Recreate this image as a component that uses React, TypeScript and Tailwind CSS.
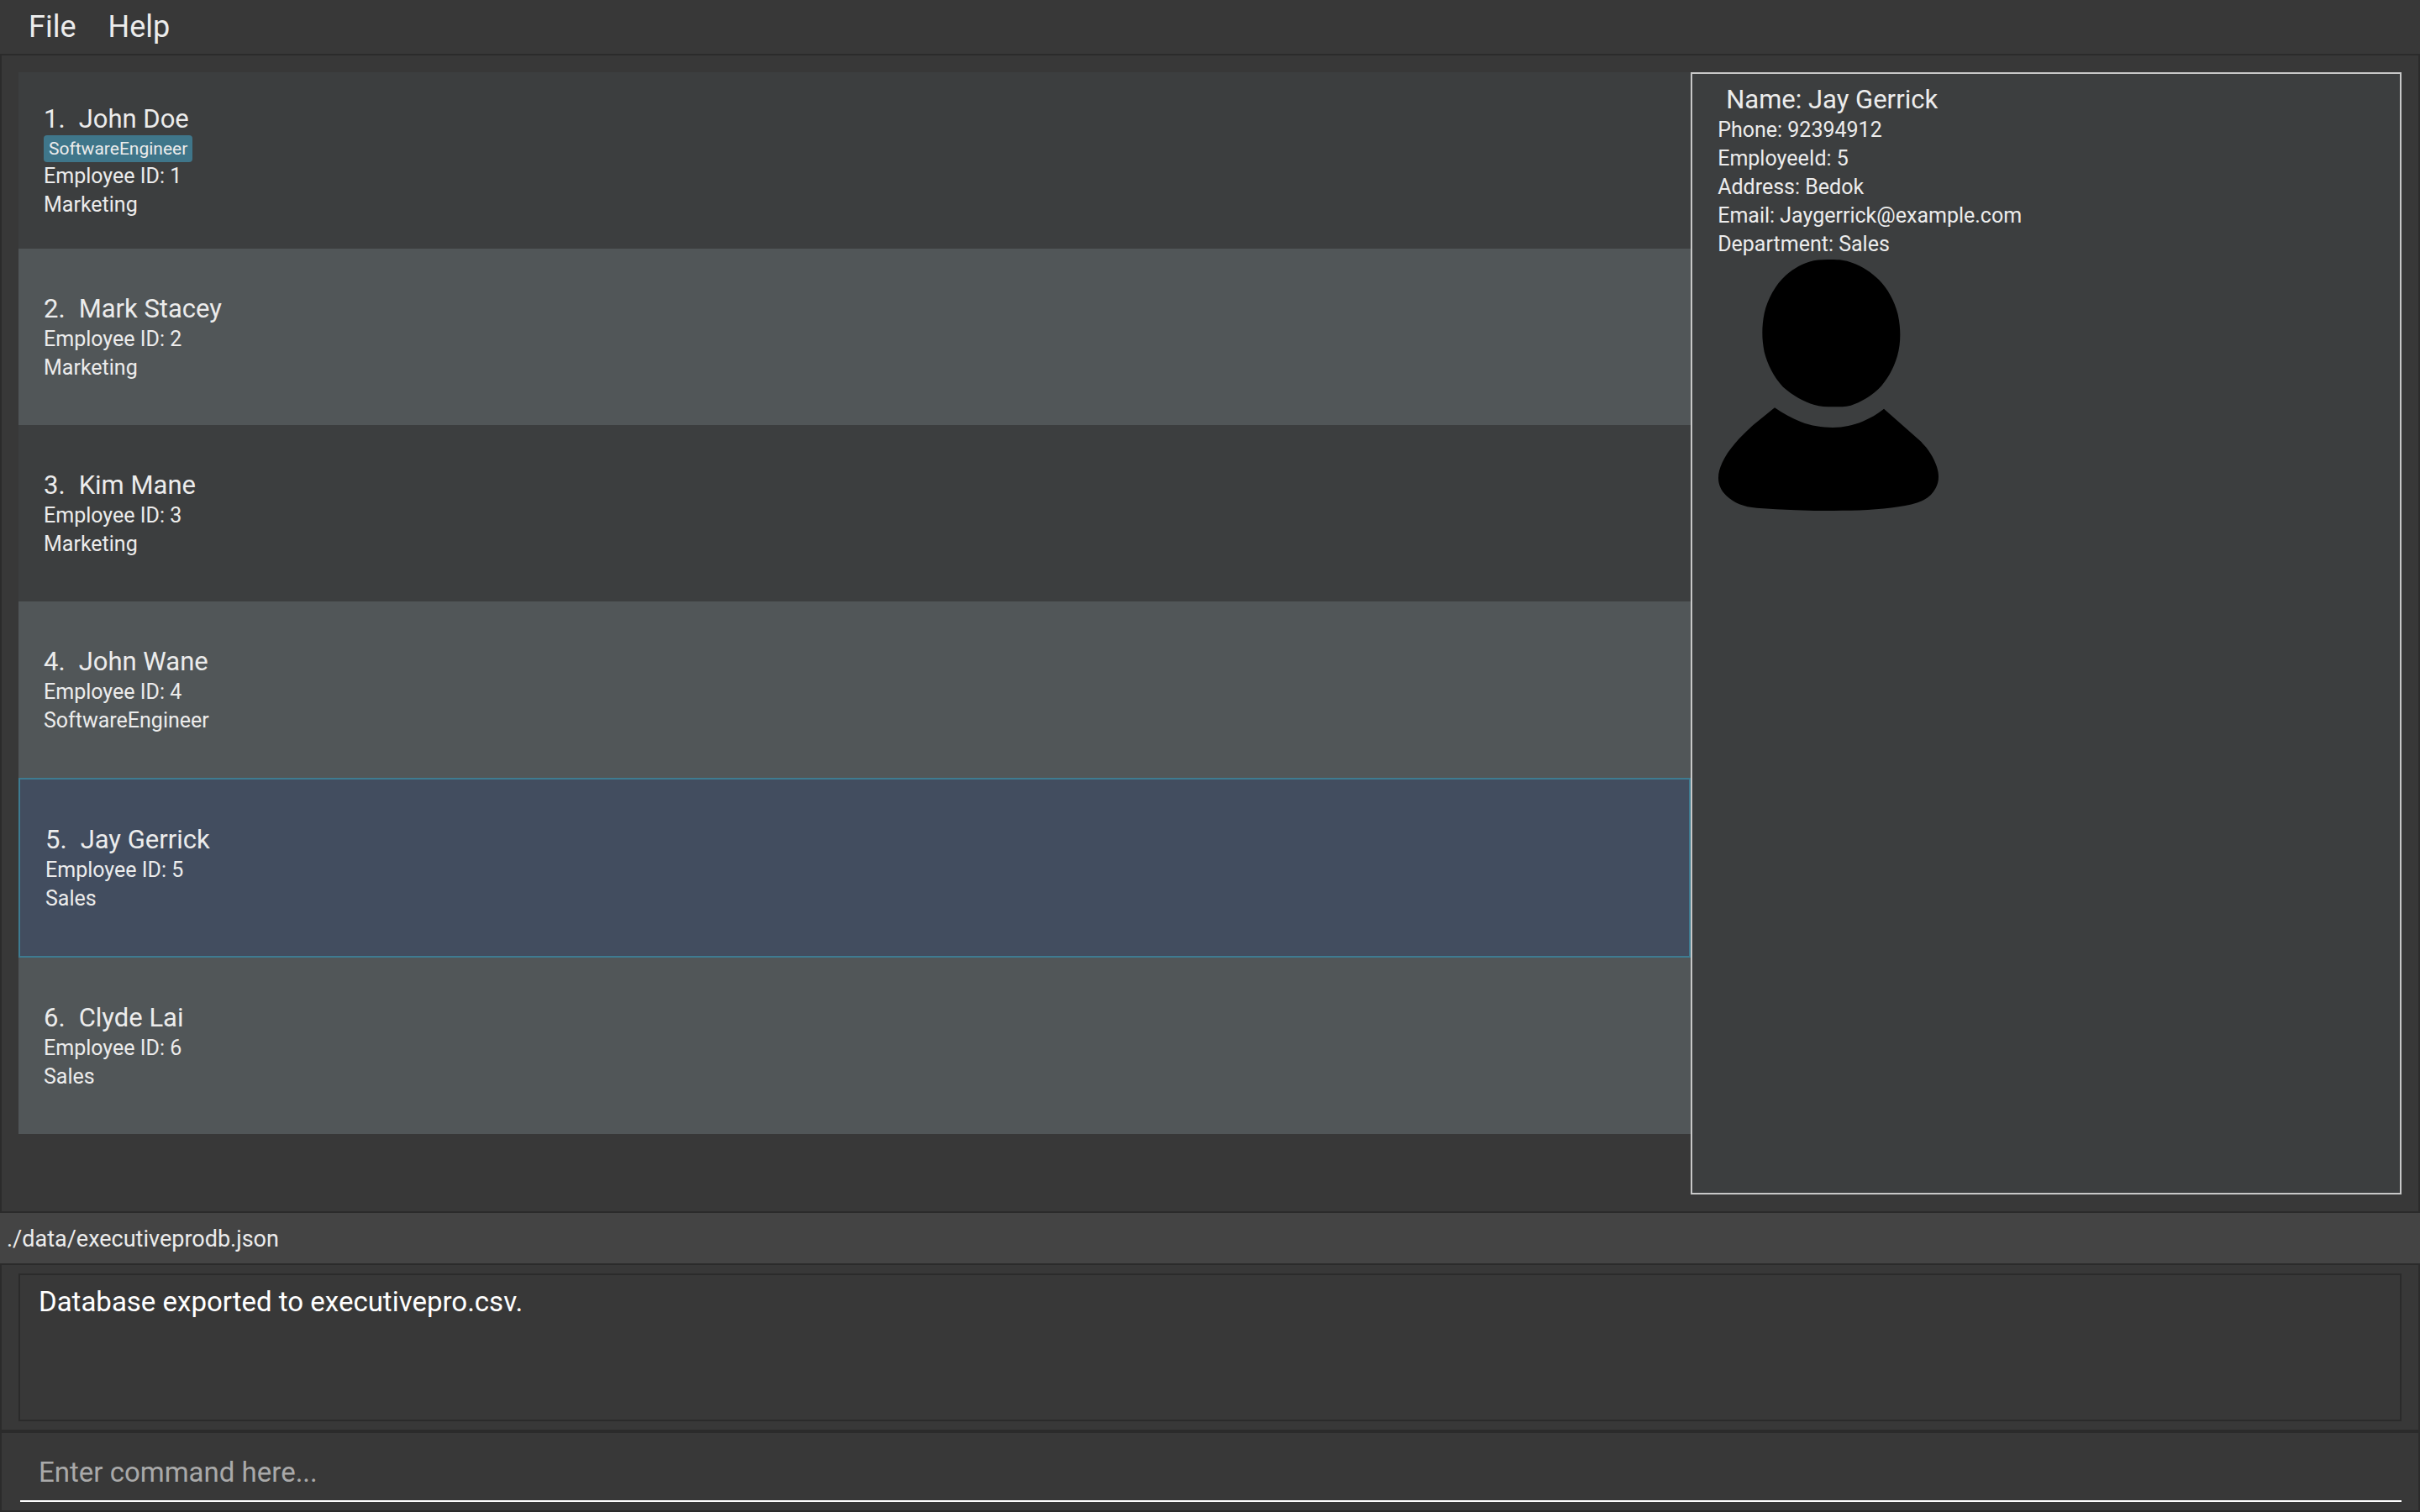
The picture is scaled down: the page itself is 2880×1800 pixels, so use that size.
type Employee = {
  id: number;
  name: string;
  department: string;
  tags?: string[];
};

const employees: Employee[] = [
  { id: 1, name: "John Doe", department: "Marketing", tags: ["SoftwareEngineer"] },
  { id: 2, name: "Mark Stacey", department: "Marketing" },
  { id: 3, name: "Kim Mane", department: "Marketing" },
  { id: 4, name: "John Wane", department: "SoftwareEngineer" },
  { id: 5, name: "Jay Gerrick", department: "Sales" },
  { id: 6, name: "Clyde Lai", department: "Sales" },
];

const selectedId = 5;

const details = [
  "Phone: 92394912",
  "EmployeeId: 5",
  "Address: Bedok",
  "Email: Jaygerrick@example.com",
  "Department: Sales",
];

function EmployeeCard({ employee }: { employee: Employee }) {
  const selected = employee.id === selectedId;
  const look = selected
    ? "border-2 border-[#3e7b91] bg-[#424d5f]"
    : employee.id % 2 === 1
      ? "bg-[#3c3e3f]"
      : "bg-[#515658]";
  return (
    <li className={look}>
      <div className="flex min-h-[210px] flex-col justify-center px-[30px]">
        <h2 className="flex gap-4 pt-0.5 text-[31px] leading-[38px]">
          <span>{employee.id}.</span>
          <span>{employee.name}</span>
        </h2>
        {employee.tags && (
          <div className="flex gap-2">
            {employee.tags.map((tag) => (
              <span key={tag} className="rounded bg-[#3f768a] px-1.5 text-[21px] leading-8">
                {tag}
              </span>
            ))}
          </div>
        )}
        <p className="text-[25px] leading-[34px]">Employee ID: {employee.id}</p>
        <p className="text-[25px] leading-[34px]">{employee.department}</p>
      </div>
    </li>
  );
}

function Portrait() {
  return (
    <svg viewBox="135 56 786 897" className="ml-[3px] mt-[1px] w-[262px]" fill="#000" role="img" aria-label="Portrait">
      <path d="M539 56C566 56 588 58 612 67C650 81 680 100 708 128C740 161 764 203 776 252C782 280 784 304 784 324C784 350 781 377 774 400C760 448 736 488 706 519C677 546 645 565 608 577C588 582 568 582 544 582C519 582 499 581 478 575C440 563 399 541 366 511C332 475 311 432 299 386C294 360 292 340 292 318C292 297 294 271 299 248C311 196 338 147 375 113C406 86 438 69 475 60C496 56 518 56 539 56Z" />
      <path d="M336 585C366 605 398 624 430 636C467 650 504 656 543 656C584 655 615 648 650 634C678 622 702 608 726 589L856 704C884 731 904 762 915 796C920 812 921 822 921 832C921 846 918 859 911 872C902 890 887 905 868 915C842 928 812 934 778 939C710 950 630 953 546 953C458 953 364 950 272 943C226 940 190 925 163 899C144 880 135 860 135 836C135 817 140 801 148 783C172 730 218 684 262 645Z" />
    </svg>
  );
}

export default function App() {
  return (
    <div className="flex min-h-screen flex-col bg-[#383838] font-['Roboto','Liberation_Sans',sans-serif] text-[#ececec]">
      <nav className="flex h-16 items-center gap-[38px] px-[34px] text-[36px] leading-10">
        <button type="button">File</button>
        <button type="button">Help</button>
      </nav>

      <main className="grid flex-1 grid-cols-[40fr_17fr] border-2 border-[#2b2b2b] p-5">
        <ul>
          {employees.map((employee) => (
            <EmployeeCard key={employee.id} employee={employee} />
          ))}
        </ul>
        <section className="border-2 border-[#c8c8c8] bg-[#3c3e3f] px-7 py-2.5">
          <h2 className="pl-3 pt-0.5 text-[31px] leading-[38px]">Name: Jay Gerrick</h2>
          <div className="pl-0.5">
            {details.map((line) => (
              <p key={line} className="text-[25px] leading-[34px]">
                {line}
              </p>
            ))}
          </div>
          <Portrait />
        </section>
      </main>

      <div className="flex h-[60px] items-center bg-[#444] px-2 pt-0.5 text-[27px] leading-10">
        ./data/executiveprodb.json
      </div>

      <section className="border-2 border-[#2b2b2b] px-5 py-2.5">
        <output className="block h-44 border-2 border-[#2b2b2b] px-[22px] py-3 text-[33px] leading-10 text-white">
          Database exported to executivepro.csv.
        </output>
      </section>

      <form className="border-2 border-[#2b2b2b] pb-2.5 pl-[22px] pr-5 pt-3" onSubmit={(event) => event.preventDefault()}>
        <input
          type="text"
          aria-label="Command"
          placeholder="Enter command here..."
          className="block h-[70px] w-full border-b-2 border-white bg-transparent px-[22px] text-[33px] text-white outline-none placeholder:text-[#a9a9a9]"
        />
      </form>
    </div>
  );
}
